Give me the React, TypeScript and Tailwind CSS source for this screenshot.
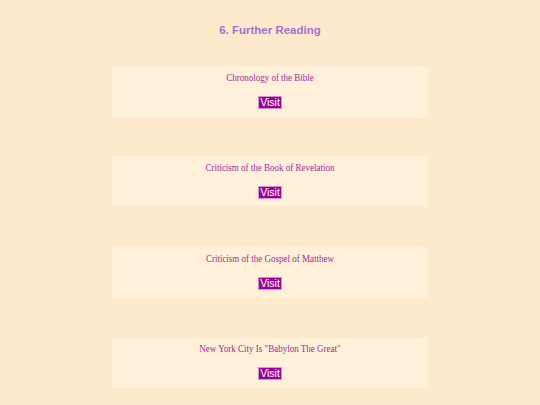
import type { ReactNode } from 'react'

const readings = [
  'Chronology of the Bible',
  'Criticism of the Book of Revelation',
  'Criticism of the Gospel of Matthew',
  'New York City Is "Babylon The Great"',
]

function ReadingCard({ children }: { children: ReactNode }) {
  return (
    <div className="flex w-[316px] flex-col items-center bg-[#fef0d9] pt-[6px] pb-[8px]">
      <p className="origin-center scale-y-110 font-['Liberation_Serif',serif] text-[9px] leading-[12px] text-[#9c2f98]">
        {children}
      </p>
      <button
        type="button"
        className="mt-[12px] h-[13px] border border-[#d68fd3] bg-[#990099] px-[1px] font-['Liberation_Sans',Arial,sans-serif] text-[10.5px] leading-[11px] text-white"
      >
        Visit
      </button>
    </div>
  )
}

export default function App() {
  return (
    <div className="min-h-[405px] bg-[#fde9cc] pt-[22px]">
      <h2 className="text-center font-['Liberation_Sans',Arial,sans-serif] text-[11.5px] leading-[16px] font-bold text-[#a46fd0]">
        6. Further Reading
      </h2>
      <div className="mt-[28px] flex flex-col items-center gap-[39.4px]">
        {readings.map((title) => (
          <ReadingCard key={title}>{title}</ReadingCard>
        ))}
      </div>
    </div>
  )
}
